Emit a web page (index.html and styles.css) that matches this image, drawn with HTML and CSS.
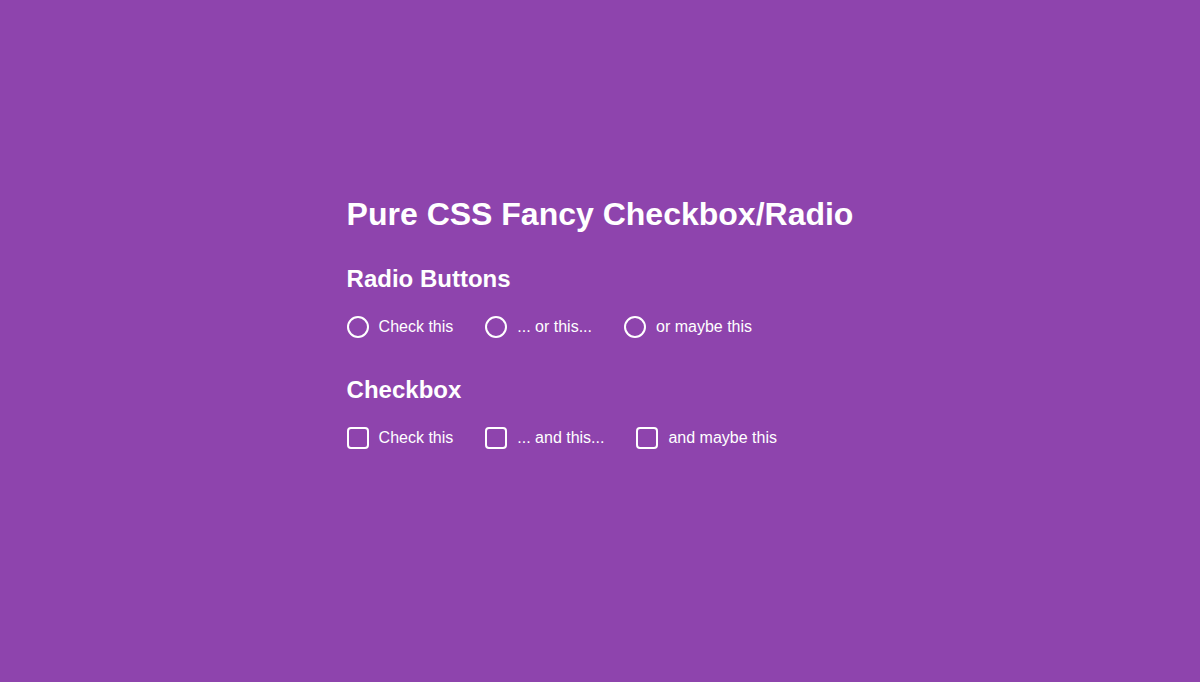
FILE: index.html
```html
<!DOCTYPE html>
<html lang="en">
<head>
  <meta charset="UTF-8">
  <meta name="viewport" content="width=device-width, initial-scale=1.0">
  <title>Pure CSS Fancy Checkbox/Radio</title>
  <link rel="stylesheet" href="styles.css">
</head>
<body>
  <div class="container">
    <h1>Pure CSS Fancy Checkbox/Radio</h1>

    <h2>Radio Buttons</h2>
    <div class="options">
      <label class="option">
        <input type="radio" name="choice" value="1">
        <span class="mark radio"></span>
        Check this
      </label>
      <label class="option">
        <input type="radio" name="choice" value="2">
        <span class="mark radio"></span>
        ... or this...
      </label>
      <label class="option">
        <input type="radio" name="choice" value="3">
        <span class="mark radio"></span>
        or maybe this
      </label>
    </div>

    <h2>Checkbox</h2>
    <div class="options">
      <label class="option">
        <input type="checkbox" value="1">
        <span class="mark box"></span>
        Check this
      </label>
      <label class="option">
        <input type="checkbox" value="2">
        <span class="mark box"></span>
        ... and this...
      </label>
      <label class="option">
        <input type="checkbox" value="3">
        <span class="mark box"></span>
        and maybe this
      </label>
    </div>
  </div>
</body>
</html>
```

FILE: styles.css
```css
body {
  display: flex;
  justify-content: center;
  min-height: 100vh;
  margin: 0;
  font-family: "Liberation Sans", Arial, sans-serif;
  background-color: #8e44ad;
  color: #fff;
}

.container {
  padding-top: 196px;
}

h1 {
  font-size: 32px;
  line-height: 37px;
  margin: 0 0 32px;
}

h2 {
  font-size: 24px;
  line-height: 28px;
  margin: 0 0 23px;
}

.options {
  display: flex;
  gap: 32px;
  margin-bottom: 38px;
}

.option {
  display: flex;
  align-items: center;
  gap: 10px;
  font-size: 16px;
  line-height: 22px;
  cursor: pointer;
}

/* hide the native control, the span draws it */
.option input {
  position: absolute;
  opacity: 0;
  pointer-events: none;
}

.mark {
  width: 22px;
  height: 22px;
  box-sizing: border-box;
  border: 2px solid #fff;
  position: relative;
}

.radio {
  border-radius: 50%;
}

.box {
  border-radius: 4px;
}

.option input:checked + .radio::after {
  content: "";
  position: absolute;
  top: 4px;
  left: 4px;
  width: 10px;
  height: 10px;
  border-radius: 50%;
  background: #fff;
}

.option input:checked + .box::after {
  content: "";
  position: absolute;
  top: 2px;
  left: 6px;
  width: 5px;
  height: 10px;
  border: solid #fff;
  border-width: 0 2px 2px 0;
  transform: rotate(45deg);
}
```
